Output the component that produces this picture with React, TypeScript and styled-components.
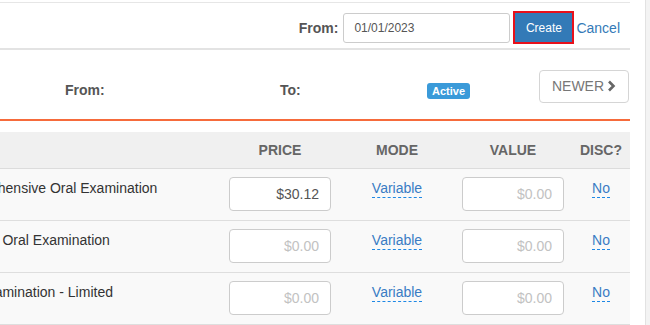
import { FC } from "react"
import styled, { createGlobalStyle } from "styled-components";

const GlobalStyle = createGlobalStyle`
  html, body {
    margin: 0;
    padding: 0;
    background: #fff;
    font-family: "Liberation Sans", Arial, sans-serif;
    color: #333;
  }
  * { box-sizing: border-box; }
`

interface IRow {
  name: string;
  price: string;
  mode: string;
  value: string;
  disc: string;
}

const rows: IRow[] = [
  { name: "Comprehensive Oral Examination", price: "$30.12", mode: "Variable", value: "", disc: "No" },
  { name: "Periodic Oral Examination", price: "", mode: "Variable", value: "", disc: "No" },
  { name: "Oral Examination - Limited", price: "", mode: "Variable", value: "", disc: "No" },
]

const App: FC = () => {
  return (
    <Page>
      <GlobalStyle />
      <Main>
        <TopBar>
          <Label>From:</Label>
          <DateInput defaultValue="01/01/2023" />
          <CreateButton>Create</CreateButton>
          <CancelLink href="#">Cancel</CancelLink>
        </TopBar>

        <Filters>
          <Label $top={10}>From:</Label>
          <Label $top={10}>To:</Label>
          <Badge>Active</Badge>
          <NewerButton>
            NEWER
            <svg width="9" height="12" viewBox="0 0 9 12">
              <polyline points="2,1.5 6.5,6 2,10.5" fill="none" stroke="#666" strokeWidth="2.6" />
            </svg>
          </NewerButton>
        </Filters>

        {/* the table is scrolled sideways, so the name column starts off screen */}
        <Clip>
          <Table>
            <HeadRow>
              <HeadCell />
              <HeadCell>Price</HeadCell>
              <HeadCell>Mode</HeadCell>
              <HeadCell>Value</HeadCell>
              <HeadCell>Disc?</HeadCell>
            </HeadRow>
            {rows.map((row, i) => (
              <Row key={i}>
                <NameCell>{row.name}</NameCell>
                <Cell>
                  <MoneyInput defaultValue={row.price} placeholder="$0.00" />
                </Cell>
                <Cell>
                  <Editable href="#">{row.mode}</Editable>
                </Cell>
                <Cell>
                  <MoneyInput defaultValue={row.value} placeholder="$0.00" />
                </Cell>
                <Cell>
                  <Editable href="#">{row.disc}</Editable>
                </Cell>
              </Row>
            ))}
          </Table>
        </Clip>
      </Main>
      <Gutter />
      <SideStrip />
    </Page>
  )
}

export default App

const Page = styled.div`
  display: flex;
  height: 325px;
  overflow: hidden;
`
const Main = styled.div`
  width: 630px;
  flex-shrink: 0;
  padding-top: 2px;
`
const Gutter = styled.div`
  width: 15px;
  flex-shrink: 0;
`
const SideStrip = styled.div`
  flex: 1;
  border-left: 1px solid #e2e2e2;
  background: #f3f3f3;
`
const TopBar = styled.div`
  display: flex;
  align-items: center;
  justify-content: flex-end;
  height: 48px;
  padding: 4px 10px 0 0;
  border-top: 1px solid #e6e6e6;
  border-bottom: 2px solid #e3e3e3;
`
const Label = styled.span<{ $top?: number }>`
  font-size: 14px;
  font-weight: bold;
  color: #555;
  line-height: 20px;
  margin-top: ${p => p.$top ?? 0}px;
`
const DateInput = styled.input`
  width: 167px;
  height: 30px;
  margin-left: 5px;
  padding: 0 10px;
  border: 1px solid #ccc;
  border-radius: 3px;
  font: 12px "Liberation Sans", Arial, sans-serif;
  color: #555;
  outline: none;
`
const CreateButton = styled.button`
  width: 61px;
  height: 33px;
  margin-left: 3px;
  padding: 0;
  background: #337ab7;
  border: 2px solid #e8101a;
  color: #fff;
  font: 12px "Liberation Sans", Arial, sans-serif;
  cursor: pointer;
`
const CancelLink = styled.a`
  margin-left: 2px;
  font-size: 14px;
  color: #337ab7;
  text-decoration: none;
`
const Filters = styled.div`
  display: grid;
  grid-template-columns: 215px 147px 112px 1fr;
  align-items: start;
  height: 71px;
  padding: 20px 1px 0 65px;
  border-bottom: 2px solid #f66b3b;
`
const Badge = styled.span`
  justify-self: start;
  margin-top: 13px;
  padding: 2px 5px;
  background: #3a9ad9;
  border-radius: 3px;
  color: #fff;
  font-size: 11px;
  font-weight: bold;
  line-height: 12px;
`
const NewerButton = styled.button`
  justify-self: end;
  display: flex;
  align-items: center;
  justify-content: center;
  gap: 3px;
  width: 90px;
  height: 33px;
  padding: 0 0 2px;
  background: #fff;
  border: 1px solid #d5d5d5;
  border-radius: 4px;
  color: #777;
  font: 14px "Liberation Sans", Arial, sans-serif;
  cursor: pointer;
`
const Clip = styled.div`
  margin-top: 11px;
  overflow: hidden;
`
const Table = styled.div`
  margin-left: -60px;
  width: 690px;
`
const HeadRow = styled.div`
  display: grid;
  grid-template-columns: 280px 120px 114px 118px 58px;
  height: 37px;
  align-items: center;
  background: #f0f0f0;
  border-bottom: 1px solid #dcdcdc;
`
const HeadCell = styled.div`
  text-align: center;
  font-size: 14px;
  font-weight: bold;
  color: #666;
  text-transform: uppercase;
`
const Row = styled.div`
  display: grid;
  grid-template-columns: 280px 120px 114px 118px 58px;
  height: 52px;
  background: #f9f9f9;
  border-bottom: 1px solid #dedede;
`
const NameCell = styled.div`
  padding: 9px 0 0 8px;
  font-size: 14px;
  line-height: 20px;
  color: #333;
  white-space: nowrap;
`
const Cell = styled.div`
  display: flex;
  justify-content: center;
  align-items: flex-start;
  padding-top: 8px;
`
const MoneyInput = styled.input`
  width: 102px;
  height: 34px;
  padding: 0 11px;
  border: 1px solid #ccc;
  border-radius: 4px;
  background: #fff;
  text-align: right;
  font: 14px "Liberation Sans", Arial, sans-serif;
  color: #555;
  outline: none;

  &::placeholder {
    color: #c2c2c2;
  }
`
const Editable = styled.a`
  margin-top: 2px;
  font-size: 14px;
  line-height: 18px;
  color: #3a7cc4;
  text-decoration: none;
  border-bottom: 1px dashed #1e88e5;
`
